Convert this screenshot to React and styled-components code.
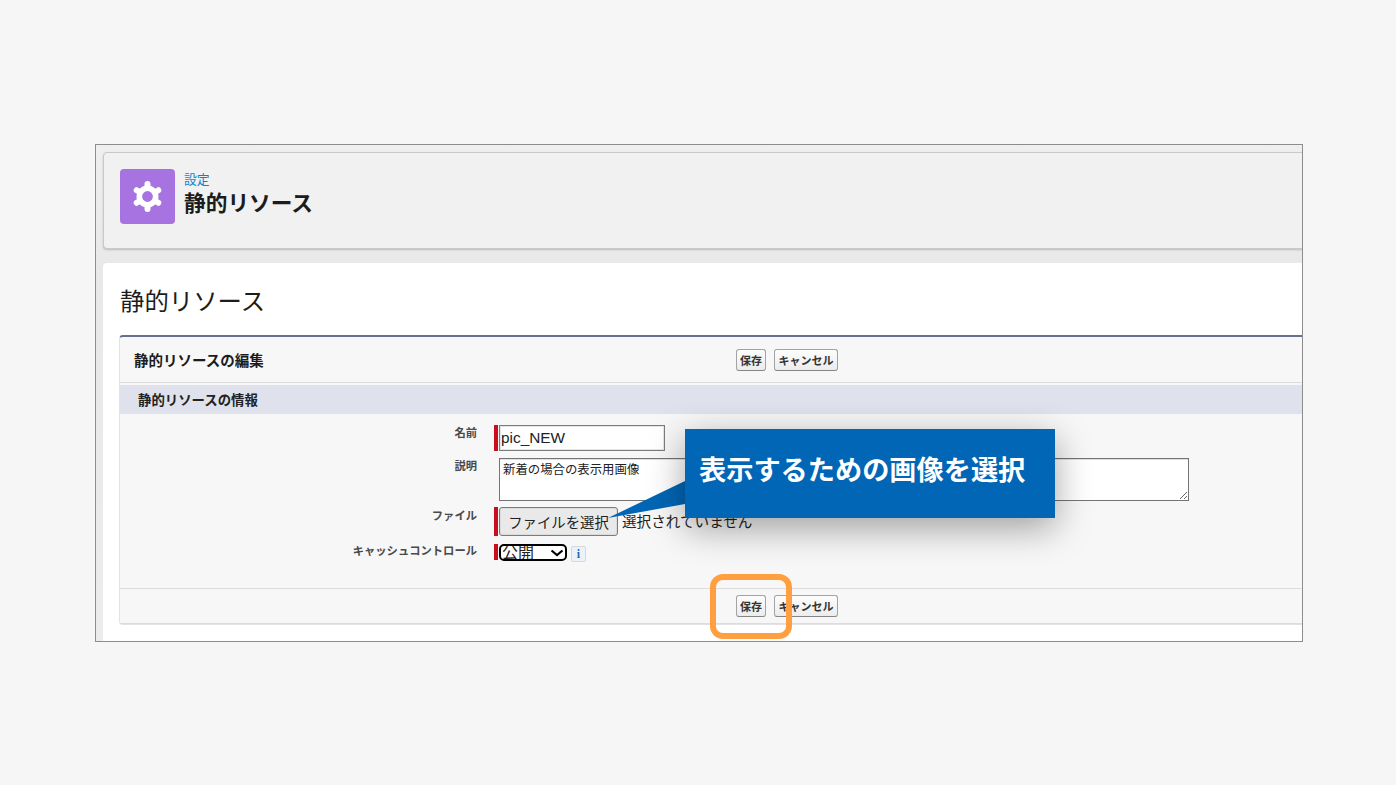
import React from 'react'
import styled, { createGlobalStyle } from 'styled-components'

const GlobalStyle = createGlobalStyle`
  html, body { margin: 0; padding: 0; background: #f6f6f6; }
  body { font-family: "Liberation Sans", "Noto Sans CJK JP", sans-serif; color: #1a1a1a; }
`

const Page = styled.div`
  width: 1396px;
  height: 785px;
  padding: 144px 0 0 95px;
  box-sizing: border-box;
  overflow: hidden;
`

const Shot = styled.div`
  position: relative;
  width: 1208px;
  height: 498px;
  box-sizing: border-box;
  border: 1px solid #8d8d8d;
  background: linear-gradient(#efefef, #e8e8e8 130px, #ececec);
  padding: 7px 0 0 7px;
  overflow: hidden;
`

const HeaderCard = styled.header`
  width: 1230px;
  height: 97px;
  box-sizing: border-box;
  display: flex;
  align-items: flex-start;
  gap: 9px;
  padding: 16px 0 0 16px;
  background: #f1f1f1;
  border: 1px solid #c9c9c9;
  border-radius: 4px;
  box-shadow: 0 1px 2px rgba(0, 0, 0, 0.2);
`

const IconTile = styled.div`
  width: 55px;
  height: 55px;
  border-radius: 4px;
  background: #a673e0;
  display: flex;
  align-items: center;
  justify-content: center;
`

const Titles = styled.div`
  display: flex;
  flex-direction: column;
  padding-top: 3px;
`

const Crumb = styled.span`
  font-size: 12.8px;
  line-height: 15px;
  color: #0b84d0;
`

const PageTitle = styled.h1`
  margin: 3px 0 0;
  font-size: 21.7px;
  line-height: 28px;
  font-weight: 700;
  color: #1c1c1c;
`

const WhiteCard = styled.main`
  width: 1230px;
  height: 400px;
  margin-top: 14px;
  padding: 21px 0 0 16px;
  box-sizing: border-box;
  background: #fff;
  border-radius: 4px 0 0 0;
`

const Heading = styled.h2`
  margin: 0 0 15px 1px;
  font-size: 24.4px;
  line-height: 36px;
  font-weight: 400;
  color: #1c1c1c;
`

const Panel = styled.section`
  width: 1220px;
  height: 290px;
  box-sizing: border-box;
  background: #f7f7f7;
  border: 1px solid #e3e3e3;
  border-top: 2px solid #666f90;
  border-radius: 4px;
  display: flex;
  flex-direction: column;
`

const BarRow = styled.div`
  height: ${p => p.$height}px;
  flex: none;
  box-sizing: border-box;
  display: flex;
  align-items: center;
  padding-left: ${p => p.$pad || 0}px;
  border-top: ${p => (p.$top ? '1px solid #dcdcdc' : 'none')};
  border-bottom: ${p => (p.$bottom ? '1px solid #dcdcdc' : 'none')};
`

const PanelTitle = styled.h3`
  margin: 0;
  width: 602px;
  flex: none;
  font-size: 14.5px;
  font-weight: 700;
  color: #1c1c1c;
`

const SmallBtn = styled.button`
  height: 22px;
  padding: 0;
  width: ${p => p.$width}px;
  margin-right: 8px;
  box-sizing: border-box;
  font-family: inherit;
  font-size: 11px;
  font-weight: 700;
  color: #333;
  background: linear-gradient(#fdfdfd, #ececec);
  border: 1px solid #a3a3a3;
  border-bottom-color: #858585;
  border-radius: 3px;
`

const Band = styled.div`
  height: 29px;
  margin-top: 2px;
  padding: 0 0 2px 18px;
  box-sizing: border-box;
  flex: none;
  display: flex;
  align-items: center;
  background: #dfe2ec;
  font-size: 13.4px;
  font-weight: 700;
  color: #222;
`

const Form = styled.div`
  flex: 1;
  display: grid;
  grid-template-columns: 357px 1fr;
  grid-auto-rows: min-content;
  column-gap: 17px;
  padding-top: 11px;
`

const Label = styled.label`
  justify-self: end;
  padding-top: ${p => p.$top || 0}px;
  font-size: 11.3px;
  line-height: 14px;
  font-weight: 700;
  color: #4a4a4a;
`

const Field = styled.div`
  display: flex;
  align-items: flex-start;
  padding-left: ${p => (p.$required ? 0 : 5)}px;
  margin-bottom: ${p => p.$after || 0}px;
`

const RequiredBar = styled.span`
  width: 4px;
  height: ${p => p.$height}px;
  margin-right: 1px;
  flex: none;
  background: #c90f1e;
`

const NameInput = styled.input`
  width: 166px;
  height: 26px;
  box-sizing: border-box;
  padding: 0 1px;
  border: 1px solid #7c7c7c;
  box-shadow: inset 0 0 0 1px rgba(0, 0, 0, 0.1);
  background: #fff;
  font-family: inherit;
  font-size: 15.4px;
  color: #222;
  outline: none;
`

const DescArea = styled.textarea`
  display: block;
  width: 690px;
  height: 43px;
  box-sizing: border-box;
  padding: 4px 3px;
  border: 1px solid #747474;
  box-shadow: inset 0 1px 0 rgba(0, 0, 0, 0.12);
  background: #fff;
  font-family: inherit;
  font-size: 12.4px;
  line-height: 14px;
  color: #222;
  outline: none;
`

const FileBtn = styled.button`
  width: 119px;
  height: 29px;
  padding: 0;
  box-sizing: border-box;
  border: 1px solid #7c7c7c;
  box-shadow: inset 0 0 0 1px rgba(0, 0, 0, 0.06);
  border-radius: 3px;
  background: #e9e9e9;
  font-family: inherit;
  font-size: 14.4px;
  color: #222;
`

const FileNote = styled.span`
  margin-left: 4px;
  font-size: 14.6px;
  line-height: 30px;
  color: #222;
`

const chevron = `url("data:image/svg+xml,%3Csvg xmlns='http://www.w3.org/2000/svg' width='14' height='8' viewBox='0 0 14 8'%3E%3Cpath d='M1.5 1.5 7 6l5.5-4.5' fill='none' stroke='%23000' stroke-width='2.2'/%3E%3C/svg%3E")`

const CacheSelect = styled.select`
  appearance: none;
  width: 68px;
  height: 17px;
  box-sizing: border-box;
  padding: 0 0 0 1px;
  border: 2px solid #000;
  border-radius: 5px;
  background: #fff ${chevron} no-repeat right 1px center;
  font-family: inherit;
  font-size: 16px;
  line-height: 13px;
  color: #222;
  outline: none;
`

const InfoChip = styled.span`
  width: 15px;
  height: 16px;
  margin: 2px 0 0 4px;
  box-sizing: border-box;
  display: flex;
  align-items: center;
  justify-content: center;
  border: 1px solid #d5d9de;
  border-radius: 2px;
  background: #edf2f8;
  font-family: "Liberation Serif", serif;
  font-size: 12px;
  font-weight: 700;
  color: #1d6fb8;
`

const Callout = styled.div`
  position: absolute;
  left: 589px;
  top: 284px;
  width: 370px;
  height: 89px;
  box-sizing: border-box;
  padding: 0 0 11px 14px;
  display: flex;
  align-items: center;
  background: #0066b5;
  box-shadow: 0 10px 36px rgba(0, 0, 0, 0.36);
  font-size: 27.2px;
  font-weight: 700;
  color: #fff;
  white-space: nowrap;
`

const CalloutTail = styled.svg`
  position: absolute;
  left: 512px;
  top: 335px;
`

const Ring = styled.div`
  position: absolute;
  left: 614px;
  top: 429px;
  width: 82px;
  height: 65px;
  box-sizing: border-box;
  border: 6px solid #ff9f3f;
  border-radius: 13px;
`

function GearIcon() {
  const teeth = [0, 60, 120, 180, 240, 300]
  return (
    <svg width="31" height="31" viewBox="0 0 31 31" fill="none" stroke="#fff">
      <circle cx="15.5" cy="15.5" r="8.2" strokeWidth="5.6" />
      {teeth.map(deg => (
        <line
          key={deg}
          x1="15.5"
          y1="7"
          x2="15.5"
          y2="3"
          strokeWidth="6"
          strokeLinecap="round"
          transform={`rotate(${deg} 15.5 15.5)`}
        />
      ))}
    </svg>
  )
}

function ActionButtons() {
  return (
    <>
      <SmallBtn $width={30}>保存</SmallBtn>
      <SmallBtn $width={64}>キャンセル</SmallBtn>
    </>
  )
}

export default function App() {
  return (
    <Page>
      <GlobalStyle />
      <Shot>
        <HeaderCard>
          <IconTile>
            <GearIcon />
          </IconTile>
          <Titles>
            <Crumb>設定</Crumb>
            <PageTitle>静的リソース</PageTitle>
          </Titles>
        </HeaderCard>

        <WhiteCard>
          <Heading>静的リソース</Heading>
          <Panel>
            <BarRow $height={46} $pad={14} $bottom>
              <PanelTitle>静的リソースの編集</PanelTitle>
              <ActionButtons />
            </BarRow>
            <Band>静的リソースの情報</Band>
            <Form>
              <Label $top={1}>名前</Label>
              <Field $required $after={7}>
                <RequiredBar $height={26} />
                <NameInput defaultValue="pic_NEW" readOnly />
              </Field>

              <Label $top={1}>説明</Label>
              <Field $after={6}>
                <DescArea defaultValue="新着の場合の表示用画像" readOnly />
              </Field>

              <Label $top={2}>ファイル</Label>
              <Field $required $after={7}>
                <RequiredBar $height={29} />
                <FileBtn>ファイルを選択</FileBtn>
                <FileNote>選択されていません</FileNote>
              </Field>

              <Label $top={0}>キャッシュコントロール</Label>
              <Field $required>
                <RequiredBar $height={16} />
                <CacheSelect defaultValue="公開">
                  <option>公開</option>
                  <option>非公開</option>
                </CacheSelect>
                <InfoChip>i</InfoChip>
              </Field>
            </Form>
            <BarRow $height={36} $pad={616} $top $bottom>
              <ActionButtons />
            </BarRow>
          </Panel>
        </WhiteCard>

        <CalloutTail width="80" height="50" viewBox="0 0 80 50">
          <polygon points="0,38 77,1 77,24" fill="#0066b5" />
        </CalloutTail>
        <Callout>表示するための画像を選択</Callout>
        <Ring />
      </Shot>
    </Page>
  )
}
